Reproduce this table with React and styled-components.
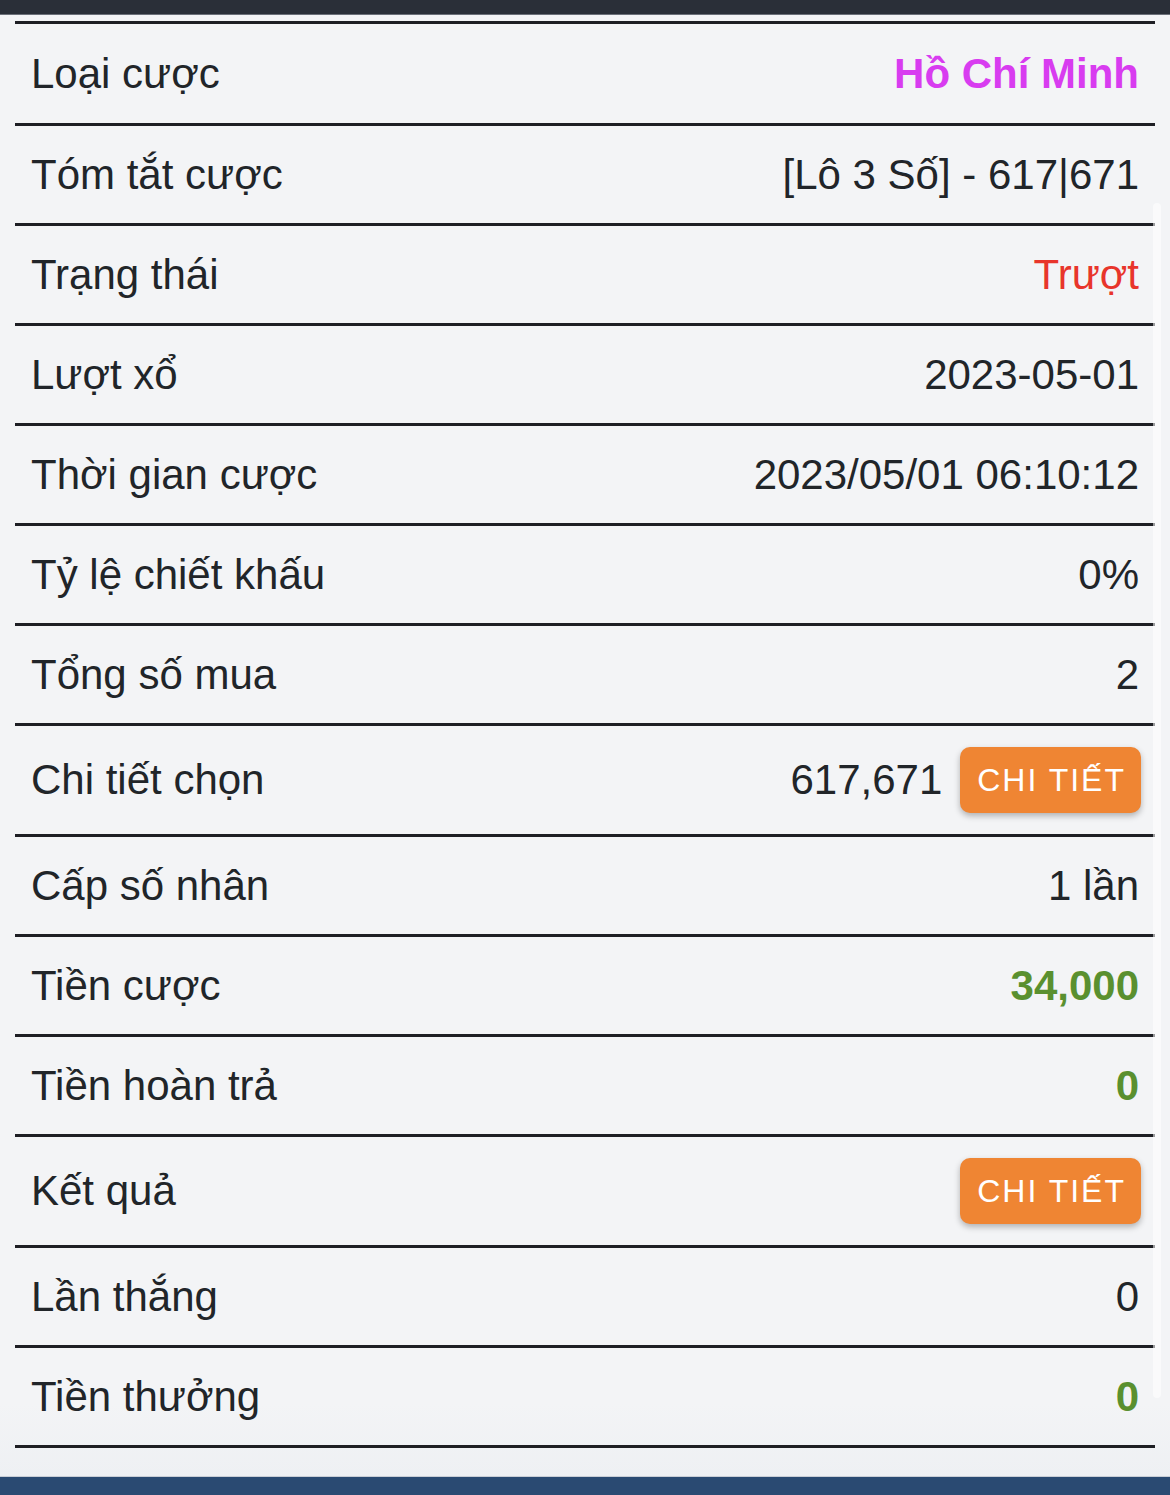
import styled, { createGlobalStyle } from "styled-components";

const GlobalStyle = createGlobalStyle`
  html, body {
    margin: 0;
    padding: 0;
    background: #f3f4f6;
  }
  body {
    font-family: "Liberation Sans", Arial, Helvetica, sans-serif;
    color: #212529;
  }
`;

// whole screen
const Page = styled.div`
  display: flex;
  flex-direction: column;
  min-height: 100vh;
  position: relative;
`;

const TopBar = styled.div`
  height: 14px;
  background: #2a2f38;
  border-bottom: 1px solid #6b7079;
`;

const BottomBar = styled.div`
  height: 18px;
  background: #2a4a72;
  border-top: 1px solid #c9ced6;
`;

const Content = styled.div`
  flex: 1;
  padding: 6px 15px 0;
  background: linear-gradient(#f3f4f6 95%, #eef0f3);
`;

const List = styled.div`
  border-top: 3px solid #1e1f24;
`;

// one line of the detail table
const Row = styled.div`
  display: flex;
  align-items: center;
  justify-content: space-between;
  min-height: ${(p) => (p.$tall ? "108px" : "97px")};
  padding: 0 16px;
  border-bottom: 3px solid #1e1f24;
  font-size: 42px;

  &:first-child {
    min-height: 99px;
  }
`;

const Label = styled.span`
  color: #212529;
`;

const Value = styled.div`
  display: flex;
  align-items: center;
  gap: 18px;
  color: ${(p) => p.$color || "#212529"};
  font-weight: ${(p) => (p.$bold ? 700 : 400)};
`;

const DetailButton = styled.button`
  font-family: inherit;
  font-size: 32px;
  letter-spacing: 2px;
  color: #fff;
  background: #ef8533;
  border: none;
  border-radius: 10px;
  height: 66px;
  padding: 0 15px 0 17px;
  margin-right: -2px;
  box-shadow: 0 3px 6px rgba(0, 0, 0, 0.28);
`;

// faint iOS scroll indicator lying over the list
const ScrollIndicator = styled.div`
  position: absolute;
  top: 203px;
  right: 9px;
  width: 8px;
  height: 1195px;
  border-radius: 4px;
  background: rgba(255, 255, 255, 0.55);
`;

const rows = [
  { label: "Loại cược", value: "Hồ Chí Minh", color: "#d83cf0", bold: true },
  { label: "Tóm tắt cược", value: "[Lô 3 Số] - 617|671" },
  { label: "Trạng thái", value: "Trượt", color: "#e8352b" },
  { label: "Lượt xổ", value: "2023-05-01" },
  { label: "Thời gian cược", value: "2023/05/01 06:10:12" },
  { label: "Tỷ lệ chiết khấu", value: "0%" },
  { label: "Tổng số mua", value: "2" },
  { label: "Chi tiết chọn", value: "617,671", button: true },
  { label: "Cấp số nhân", value: "1 lần" },
  { label: "Tiền cược", value: "34,000", color: "#5a902f", bold: true },
  { label: "Tiền hoàn trả", value: "0", color: "#5a902f", bold: true },
  { label: "Kết quả", value: "", button: true },
  { label: "Lần thắng", value: "0" },
  { label: "Tiền thưởng", value: "0", color: "#5a902f", bold: true },
];

export default function App() {
  return (
    <Page>
      <GlobalStyle />
      <TopBar />
      <Content>
        <List>
          {rows.map((r) => (
            <Row key={r.label} $tall={r.button}>
              <Label>{r.label}</Label>
              <Value $color={r.color} $bold={r.bold}>
                {r.value && <span>{r.value}</span>}
                {r.button && <DetailButton>CHI TIẾT</DetailButton>}
              </Value>
            </Row>
          ))}
        </List>
      </Content>
      <BottomBar />
      <ScrollIndicator />
    </Page>
  );
}
